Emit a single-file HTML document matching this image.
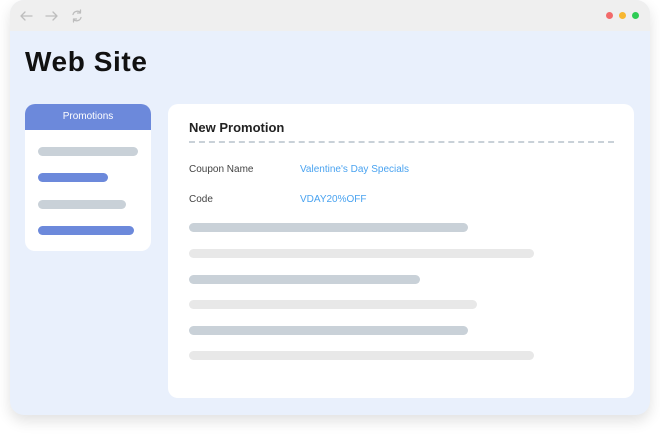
<!DOCTYPE html>
<html><head><style>
*{margin:0;padding:0;box-sizing:border-box}
body{width:660px;height:436px;background:#fff;position:relative;overflow:hidden;font-family:"Liberation Sans",sans-serif}
.win{position:absolute;left:10px;top:0;width:640px;height:415px;border-radius:14px;background:#e9f0fc;overflow:hidden;box-shadow:0 6px 14px rgba(0,0,0,0.12)}
.bar{position:absolute;left:0;top:0;width:100%;height:31px;background:#efefef}
.dot{position:absolute;top:12px;width:7px;height:7px;border-radius:50%}
.abs{position:absolute}
.pill{position:absolute;height:9px;border-radius:5px}
.g{background:#c9d1d8}.b{background:#6c89db}.l{background:#e8e8e8}
</style></head><body>
<div class="win">
<div class="bar">
<svg class="abs" style="left:8px;top:8px" width="70" height="16" viewBox="0 0 70 16" fill="none" stroke="#bdbdbd" stroke-width="1.3" stroke-linecap="round" stroke-linejoin="round">
<path d="M3 8h11M3 8l4-4M3 8l4 4"/>
<path d="M28 8h11M39 8l-4-4M39 8l-4 4"/>
<path d="M62.5 4.5a4.5 4.5 0 0 0-7.5 2M55.5 11.5a4.5 4.5 0 0 0 7.5-2M62.5 2v3h-3M55.5 14v-3h3"/>
</svg>
<div class="dot" style="left:596px;background:#f26a6a"></div>
<div class="dot" style="left:609px;background:#f7b731"></div>
<div class="dot" style="left:622px;background:#2ecc55"></div>
</div>
</div>
<div class="abs" style="left:25px;top:46px;font-size:28px;font-weight:bold;color:#111;letter-spacing:0.6px">Web Site</div>
<div class="abs" style="left:25px;top:104px;width:126px;height:147px;background:#fff;border-radius:10px;overflow:hidden">
<div style="height:26px;background:#6c89db;color:#fff;font-size:10px;text-align:center;line-height:26px">Promotions</div>
</div>
<div class="pill g" style="left:38px;top:147px;width:100px"></div>
<div class="pill b" style="left:38px;top:173px;width:70px"></div>
<div class="pill g" style="left:38px;top:200px;width:88px"></div>
<div class="pill b" style="left:38px;top:226px;width:96px"></div>
<div class="abs" style="left:168px;top:104px;width:466px;height:294px;background:#fff;border-radius:10px"></div>
<div class="abs" style="left:189px;top:120px;font-size:13px;font-weight:bold;color:#222">New Promotion</div>
<div class="abs" style="left:189px;top:141px;width:425px;border-top:2px dashed #c9d1d8"></div>
<div class="abs" style="left:189px;top:164px;font-size:10px;color:#444">Coupon Name</div>
<div class="abs" style="left:300px;top:164px;font-size:10px;color:#4aa3f0">Valentine's Day Specials</div>
<div class="abs" style="left:189px;top:194px;font-size:10px;color:#444">Code</div>
<div class="abs" style="left:300px;top:194px;font-size:10px;color:#4aa3f0">VDAY20%OFF</div>
<div class="pill g" style="left:189px;top:223px;width:279px"></div>
<div class="pill l" style="left:189px;top:249px;width:345px"></div>
<div class="pill g" style="left:189px;top:275px;width:231px"></div>
<div class="pill l" style="left:189px;top:300px;width:288px"></div>
<div class="pill g" style="left:189px;top:326px;width:279px"></div>
<div class="pill l" style="left:189px;top:351px;width:345px"></div>
</body></html>
